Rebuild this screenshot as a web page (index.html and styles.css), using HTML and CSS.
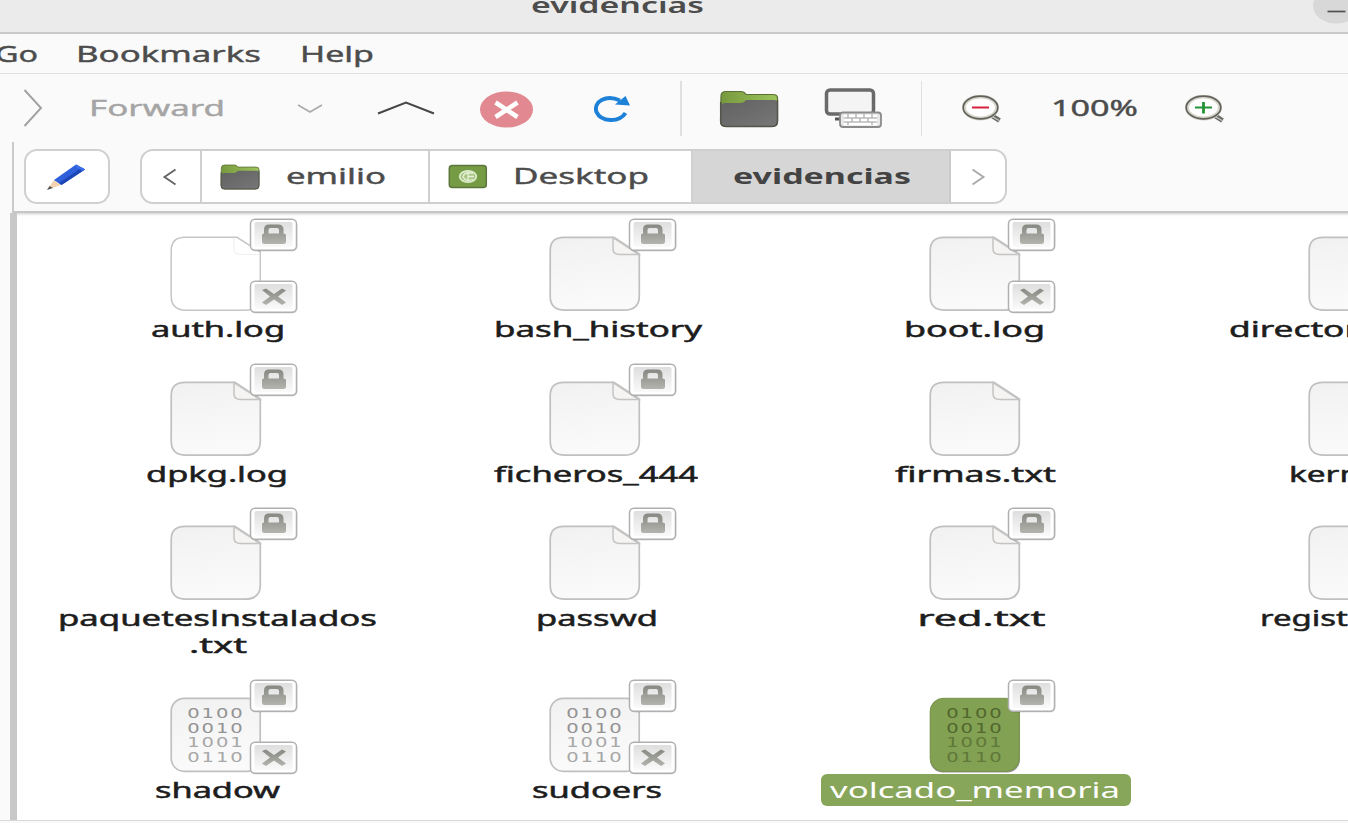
FILE: index.html
```html
<!DOCTYPE html>
<html lang="en">
<head>
<meta charset="utf-8">
<title>evidencias</title>
<link rel="stylesheet" href="styles.css">
</head>
<body>
<svg class="defs" width="0" height="0" aria-hidden="true">
  <defs>
    <linearGradient id="paper" x1="0" y1="0" x2=".15" y2="1"><stop offset="0" stop-color="#f1f1f1"/><stop offset=".5" stop-color="#f6f6f6"/><stop offset="1" stop-color="#fafafa"/></linearGradient>
    <linearGradient id="emb" x1="0" y1="0" x2="0" y2="1"><stop offset="0" stop-color="#dedede"/><stop offset="1" stop-color="#fafafa"/></linearGradient>
    <linearGradient id="glyph" x1="0" y1="0" x2="0" y2="1"><stop offset="0" stop-color="#868882"/><stop offset="1" stop-color="#b2b4ad"/></linearGradient>
    <linearGradient id="dark" x1="0" y1="0" x2="1" y2="1"><stop offset="0" stop-color="#616161"/><stop offset="1" stop-color="#777"/></linearGradient>
    <linearGradient id="green" x1="0" y1="0" x2="1" y2="0"><stop offset="0" stop-color="#77993e"/><stop offset="1" stop-color="#9dc45b"/></linearGradient>
    <symbol id="page" viewBox="0 0 92 77">
      <path d="M15 1.3H65L90.3 18V60Q90.3 74.2 75 74.2H16Q1.2 74.2 1.2 60V15Q1.2 1.3 15 1.3Z" fill="url(#paper)" stroke="#c0c0c0" stroke-width="1.7"/>
      <path d="M64 1.5V13Q64 18.5 71 18.5H90Z" fill="#f5f4f2" stroke="#c4c4c4" stroke-width="1.5"/>
    </symbol>
    <symbol id="blank" viewBox="0 0 92 77">
      <path d="M15 1.3H67L90.3 16V60Q90.3 74.2 75 74.2H16Q1.2 74.2 1.2 60V15Q1.2 1.3 15 1.3Z" fill="#fff" stroke="#c6c6c6" stroke-width="1.5"/>
      <path d="M64 2V13Q64 18.5 71 18.5H89" fill="none" stroke="#f0f0f0" stroke-width="1.2"/>
    </symbol>
    <symbol id="lock" viewBox="0 0 50 35">
      <rect x="1.5" y="2.5" width="47" height="31" rx="5" fill="#000" opacity=".13"/>
      <rect x="1.5" y="1.2" width="46" height="31" rx="4.5" fill="#fff" stroke="#b0b0b0" stroke-width="1.5"/>
      <rect x="5.5" y="4" width="38" height="25" rx="2" fill="url(#emb)"/>
      <path d="M13 17Q13 15.5 15 15.5V11.5Q15 6.5 20 6.5H29Q34.500 6.5 34.500 11.5V15.5Q37 15.5 37 17V24Q37 26 34.500 26H15.500Q13 26 13 24ZM19.500 15.500H30V12Q30 10 28 10H21.500Q19.500 10 19.500 12Z" fill="url(#glyph)"/>
    </symbol>
    <symbol id="deny" viewBox="0 0 50 35">
      <rect x="1.5" y="2.5" width="47" height="31" rx="5" fill="#000" opacity=".13"/>
      <rect x="1.5" y="1.2" width="46" height="31" rx="4.5" fill="#fff" stroke="#b0b0b0" stroke-width="1.5"/>
      <rect x="5.5" y="4" width="38" height="25" rx="2" fill="url(#emb)"/>
      <path d="M13 10 17 8.500 25 14 33 8.500 37 10.500 29 16.500 37 22.500 33 25 25 19.500 17 25 13 22.500 21 16.500Z" fill="url(#glyph)"/>
    </symbol>
    <symbol id="folder" viewBox="0 0 60 38">
      <path d="M2 6Q2 1.500 7 1.500H22Q25 1.500 27 4.500H54Q58.500 4.500 58.500 8V31Q58.500 36.500 53 36.500H7Q1.500 36.500 1.500 31Z" fill="url(#green)" stroke="#5c7036" stroke-width="1.2"/>
      <path d="M2 16Q2 13 7 13H21Q25 13 27 10H55Q58.500 10 58.500 13V31Q58.500 36.500 53 36.500H7Q1.500 36.500 1.500 31Z" fill="url(#dark)"/>
      <path d="M1.700 12V31Q1.700 36.500 7 36.500H53Q58.500 36.500 58.500 31V10" fill="none" stroke="#51554a" stroke-width="1.500"/>
    </symbol>
    <symbol id="lens" viewBox="0 0 40 28">
      <path d="M28 19.500 37.500 25.500" stroke="#6b6b66" stroke-width="5"/>
      <path d="M30 21.500 37 25.500" stroke="#c9c9c4" stroke-width="1.300"/>
      <ellipse cx="18.500" cy="12.500" rx="16.500" ry="11" fill="#fff" stroke="#d8d6cb" stroke-width="4"/>
      <ellipse cx="18.500" cy="12.500" rx="17.300" ry="11.400" fill="none" stroke="#62625d" stroke-width="1.700"/>
    </symbol>
  </defs>
</svg>

<div class="window">
  <header class="titlebar">
    <svg class="title" width="174" height="32"><text class="t semi" x="0" y="13" textLength="173" lengthAdjust="spacingAndGlyphs">evidencias</text></svg>
    <svg class="minimize" width="36" height="26"><ellipse cx="24" cy="6" rx="23" ry="17.500" fill="#d8d8d8"/><path d="M15.500 11.500H33.500" stroke="#505050" stroke-width="1.700"/></svg>
  </header>

  <nav class="menubar">
    <svg class="go" width="40" height="38"><text class="t" x="-5" y="28.200" textLength="43" lengthAdjust="spacingAndGlyphs">Go</text></svg>
    <svg class="bookmarks" width="186" height="38"><text class="t" x="0" y="28.200" textLength="185" lengthAdjust="spacingAndGlyphs">Bookmarks</text></svg>
    <svg width="76" height="38"><text class="t" x="0" y="28.200" textLength="74" lengthAdjust="spacingAndGlyphs">Help</text></svg>
  </nav>

  <div class="toolbar">
    <svg class="forward-arrow" width="24" height="42"><path d="M4.500 3 21 21 4.500 39" fill="none" stroke="#a0a0a0" stroke-width="1.900"/></svg>
    <svg class="forward" width="140" height="42"><text class="t muted" x="0" y="28.500" textLength="136" lengthAdjust="spacingAndGlyphs">Forward</text></svg>
    <svg class="drop" width="28" height="12"><path d="M2 3 14 10 26 3" fill="none" stroke="#aaa" stroke-width="1.700"/></svg>
    <svg class="up" width="60" height="16"><path d="M2 13.500 30 2.500 58 13.500" fill="none" stroke="#464646" stroke-width="1.900"/></svg>
    <svg class="stop" width="54" height="37"><ellipse cx="27.500" cy="18.500" rx="26.500" ry="18" fill="#e18890"/><path d="M16.500 11.500 38.500 26M38.500 11.500 16.500 26" stroke="#fff" stroke-width="4.500"/></svg>
    <svg class="reload" width="40" height="28"><path d="M33.500 18C27 28 9 27 4.500 17C1 7 14-1 28 5.500" fill="none" stroke="#1d82d7" stroke-width="4"/><path d="M33.500 1 38 10.500 23 9.500Z" fill="#1d82d7"/></svg>
    <i class="separator"></i>
    <svg class="home" width="60" height="38"><use href="#folder"/></svg>
    <svg class="computer" width="60" height="42">
      <rect x="3.500" y="3" width="47" height="24" rx="3.500" fill="#f4f4f4" stroke="#6a6a6a" stroke-width="3.500"/>
      <path d="M12 32H22" stroke="#555" stroke-width="3"/>
      <rect x="17" y="25.500" width="41" height="14.500" rx="3" fill="#e8e8e8" stroke="#8a8a8a" stroke-width="1.800"/>
      <path d="M21 29H54M21 33H54M21 37H54" stroke="#fff" stroke-width="2.500"/>
      <path d="M21 31H54M21 35H54M25 27V31M33 27V31M41 27V31M49 27V31M29 31V35M37 31V35M45 31V35M25 35V38M49 35V38" stroke="#aaa" stroke-width="1.200"/>
    </svg>
    <i class="separator"></i>
    <svg class="zoom-out" width="40" height="28"><use href="#lens"/><path d="M10 12.500H27" stroke="#d4213d" stroke-width="2"/></svg>
    <svg class="percent" width="90" height="42"><text class="t" x="0" y="28.500" textLength="87" lengthAdjust="spacingAndGlyphs">100%</text></svg>
    <svg class="zoom-in" width="40" height="28"><use href="#lens"/><path d="M10 12.500H27" stroke="#249334" stroke-width="2"/><path d="M18.500 7V18.500" stroke="#249334" stroke-width="2.800"/></svg>
  </div>

  <div class="locationbar">
    <div class="button edit">
      <svg width="42" height="28"><path d="M1.500 26.500 8 17 15 22Z" fill="#f3d3b0"/><path d="M1 27 3.500 23 7 25Z" fill="#555"/><path d="M8 17 30 1.500 39 6.500 15.500 22Z" fill="#2f60dc"/><path d="M13 20 36 4.500 39 6.500 15.500 22Z" fill="#1c46b5"/><path d="M28.500 3 30.500 1.500 39 6.500 36.500 8Z" fill="#3c6ee9"/></svg>
    </div>
    <div class="crumbs">
      <div class="crumb prev"><svg width="16" height="18"><path d="M14.500 1.500 3.500 9 14.500 16.500" fill="none" stroke="#666" stroke-width="1.900"/></svg></div>
      <div class="crumb emilio">
        <svg width="40" height="26" viewBox="0 0 60 38" preserveAspectRatio="none"><use href="#folder" width="60" height="38"/></svg>
        <svg width="102" height="51"><text class="t" x="0" y="33" textLength="100" lengthAdjust="spacingAndGlyphs">emilio</text></svg>
      </div>
      <div class="crumb desktop">
        <svg width="40" height="25"><rect x="1.300" y="1.500" width="37" height="22" rx="3" fill="#769b45" stroke="#5b753a" stroke-width="1.500"/><ellipse cx="20" cy="12.500" rx="8.300" ry="5.700" fill="#a8c584" stroke="#dcebca" stroke-width="1.700"/><path d="M25 9.500Q17 7 15 12.500Q17 18 25 15.500M20 9.500V15.500M20 12.500H26" fill="none" stroke="#e6f1d8" stroke-width="1.300"/></svg>
        <svg width="140" height="51"><text class="t" x="0" y="33" textLength="136" lengthAdjust="spacingAndGlyphs">Desktop</text></svg>
      </div>
      <div class="crumb current"><svg width="179" height="51"><text class="t bold" x="0" y="33" textLength="178" lengthAdjust="spacingAndGlyphs">evidencias</text></svg></div>
      <div class="crumb next"><svg width="16" height="18"><path d="M2.500 1.500 13.500 9 2.500 16.500" fill="none" stroke="#aaa" stroke-width="1.900"/></svg></div>
    </div>
  </div>

  <main class="files">
    <div class="file"><div class="icon"><svg width="92" height="77"><use href="#blank"/></svg><svg class="badge top" width="50" height="35"><use href="#lock"/></svg><svg class="badge low" width="50" height="35"><use href="#deny"/></svg></div>
      <svg class="label" width="134" height="34"><text class="t name" y="24.500" textLength="134" lengthAdjust="spacingAndGlyphs">auth.log</text></svg></div>
    <div class="file"><div class="icon"><svg width="92" height="77"><use href="#page"/></svg><svg class="badge top" width="50" height="35"><use href="#lock"/></svg></div>
      <svg class="label" width="208" height="34"><text class="t name" x="1" y="24.500" textLength="208" lengthAdjust="spacingAndGlyphs">bash_history</text></svg></div>
    <div class="file"><div class="icon"><svg width="92" height="77"><use href="#page"/></svg><svg class="badge top" width="50" height="35"><use href="#lock"/></svg><svg class="badge low" width="50" height="35"><use href="#deny"/></svg></div>
      <svg class="label" width="142" height="34"><text class="t name" x="-1" y="24.500" textLength="141" lengthAdjust="spacingAndGlyphs">boot.log</text></svg></div>
    <div class="file"><div class="icon"><svg width="92" height="77"><use href="#page"/></svg></div>
      <svg class="label" width="252" height="34"><text class="t name" x="-1" y="24.500" textLength="130" lengthAdjust="spacingAndGlyphs">director</text></svg></div>

    <div class="file"><div class="icon"><svg width="92" height="77"><use href="#page"/></svg><svg class="badge top" width="50" height="35"><use href="#lock"/></svg></div>
      <svg class="label" width="143" height="34"><text class="t name" y="24.500" textLength="142" lengthAdjust="spacingAndGlyphs">dpkg.log</text></svg></div>
    <div class="file"><div class="icon"><svg width="92" height="77"><use href="#page"/></svg><svg class="badge top" width="50" height="35"><use href="#lock"/></svg></div>
      <svg class="label" width="205" height="34"><text class="t name" y="24.500" textLength="204" lengthAdjust="spacingAndGlyphs">ficheros_444</text></svg></div>
    <div class="file"><div class="icon"><svg width="92" height="77"><use href="#page"/></svg></div>
      <svg class="label" width="162" height="34"><text class="t name" y="24.500" textLength="161" lengthAdjust="spacingAndGlyphs">firmas.txt</text></svg></div>
    <div class="file"><div class="icon"><svg width="92" height="77"><use href="#page"/></svg></div>
      <svg class="label" width="133" height="34"><text class="t name" y="24.500" textLength="71" lengthAdjust="spacingAndGlyphs">kern</text></svg></div>

    <div class="file"><div class="icon"><svg width="92" height="77"><use href="#page"/></svg><svg class="badge top" width="50" height="35"><use href="#lock"/></svg></div>
      <svg class="label" width="320" height="60"><text class="t name" y="24.500" textLength="319" lengthAdjust="spacingAndGlyphs">paquetes<tspan class="plain">I</tspan>nstalados</text><text class="t name" x="131" y="52" textLength="58" lengthAdjust="spacingAndGlyphs">.txt</text></svg></div>
    <div class="file"><div class="icon"><svg width="92" height="77"><use href="#page"/></svg><svg class="badge top" width="50" height="35"><use href="#lock"/></svg></div>
      <svg class="label" width="122" height="34"><text class="t name" y="24.500" textLength="122" lengthAdjust="spacingAndGlyphs">passwd</text></svg></div>
    <div class="file"><div class="icon"><svg width="92" height="77"><use href="#page"/></svg><svg class="badge top" width="50" height="35"><use href="#lock"/></svg></div>
      <svg class="label" width="128" height="34"><text class="t name" x="5.500" y="24.500" textLength="128" lengthAdjust="spacingAndGlyphs">red.txt</text></svg></div>
    <div class="file"><div class="icon"><svg width="92" height="77"><use href="#page"/></svg></div>
      <svg class="label" width="191" height="34"><text class="t name" y="24.500" textLength="88" lengthAdjust="spacingAndGlyphs">regist</text></svg></div>

    <div class="file"><div class="icon"><svg class="binary" width="92" height="77"><rect x="1.200" y="1.300" width="89" height="73" rx="13" fill="url(#paper)" stroke="#c0c0c0" stroke-width="1.700"/><g class="bits" transform="scale(1.35 1)"><text x="12.800" y="21.500">0100</text><text x="12.800" y="36">0010</text><text class="pale" x="12.800" y="50.500">1001</text><text class="pale" x="12.800" y="65">0110</text></g></svg><svg class="badge top" width="50" height="35"><use href="#lock"/></svg><svg class="badge low" width="50" height="35"><use href="#deny"/></svg></div>
      <svg class="label" width="125" height="34"><text class="t name" y="24.500" textLength="125" lengthAdjust="spacingAndGlyphs">shadow</text></svg></div>
    <div class="file"><div class="icon"><svg class="binary" width="92" height="77"><rect x="1.200" y="1.300" width="89" height="73" rx="13" fill="url(#paper)" stroke="#c0c0c0" stroke-width="1.700"/><g class="bits" transform="scale(1.35 1)"><text x="12.800" y="21.500">0100</text><text x="12.800" y="36">0010</text><text class="pale" x="12.800" y="50.500">1001</text><text class="pale" x="12.800" y="65">0110</text></g></svg><svg class="badge top" width="50" height="35"><use href="#lock"/></svg><svg class="badge low" width="50" height="35"><use href="#deny"/></svg></div>
      <svg class="label" width="130" height="34"><text class="t name" y="24.500" textLength="130" lengthAdjust="spacingAndGlyphs">sudoers</text></svg></div>
    <div class="file selected"><div class="icon"><svg class="binary" width="92" height="77"><rect x="1" y="2.500" width="90" height="73" rx="13" fill="#8c8f88"/><rect x="1.200" y="1.300" width="89" height="73" rx="13" fill="#83a152" stroke="#78944c" stroke-width="1"/><g class="bits green" transform="scale(1.35 1)"><text x="12.800" y="21.500">0100</text><text x="12.800" y="36">0010</text><text class="pale" x="12.800" y="50.500">1001</text><text class="pale" x="12.800" y="65">0110</text></g></svg><svg class="badge top" width="50" height="35"><use href="#lock"/></svg></div>
      <svg class="label" width="310" height="32"><text class="t name" x="9" y="23.500" textLength="290" lengthAdjust="spacingAndGlyphs">volcado_memoria</text></svg></div>
  </main>
  <footer class="statusbar"></footer>
</div>
</body>
</html>
```
FILE: styles.css
```css
* { box-sizing: border-box; }
body { margin: 0; overflow: hidden; font-family: "Noto Sans", "Open Sans", sans-serif; }
svg { display: block; flex: none; }
.defs { position: absolute; }
.window { width: 1348px; height: 823px; overflow: hidden; display: flex; flex-direction: column; background: #fafafa; }
.window > * { flex: none; }
.t { font: 22px "Noto Sans", "Open Sans", sans-serif; fill: #4c4c4c; stroke: #4c4c4c; stroke-width: .4px; }
.muted { fill: #a5a5a5; stroke: #a5a5a5; }
.bold { font-weight: 700; fill: #434343; stroke: none; }
.semi { font-weight: 600; stroke: none; }
.name { fill: #1d1d1d; stroke: #1d1d1d; stroke-width: .5px; }
.plain { font-family: "Open Sans", sans-serif; }

.titlebar { height: 34px; display: flex; justify-content: space-between; padding-left: 531px; background: #ebebeb; border-bottom: 2px solid #c9c9c9; }
.title, .go { overflow: visible; }
.menubar { height: 40px; display: flex; border-bottom: 1px solid #e0e0e0; }
.go { margin-right: 36px; }
.bookmarks { margin-right: 38px; }

.toolbar { height: 68px; display: flex; align-items: center; padding-left: 20px; }
.forward-arrow { margin-right: 45px; }
.forward { margin-right: 67px; }
.drop { margin-right: 52px; }
.up { margin-right: 43px; }
.stop { margin: 3px 59px 0 0; }
.reload { margin: 2px 48px 0 0; }
.separator { width: 1.5px; height: 55px; background: #e0e0e0; }
.home { margin: 2px 44px 0 37px; }
.computer { margin: 0 38px 0 0; }
.zoom-out { margin: 2px 49px 0 40px; }
.percent { margin-right: 44px; }
.zoom-in { margin-top: 2px; }

.locationbar { height: 71px; margin-left: 12px; display: flex; align-items: flex-start; gap: 30px; padding: 7px 0 0 10px; border-left: 2px solid #cbcbcb; border-bottom: 2px solid #c6c6c6; box-shadow: -14px 2px 0 -2px #fafafa; }
.button { width: 86px; height: 55px; display: flex; align-items: center; justify-content: center; background: #fff; border: 2px solid #d0d0d0; border-radius: 13px; }
.crumbs { height: 55px; display: flex; border: 2px solid #cfcfcf; border-radius: 13px; overflow: hidden; background: #fff; }
.crumb { display: flex; align-items: center; border-right: 2px solid #d0d0d0; }
.prev { width: 60px; padding-left: 19px; }
.emilio { width: 228px; padding-left: 18px; gap: 26px; }
.desktop { width: 263px; padding-left: 18px; gap: 25px; }
.current { width: 258px; padding-left: 40px; background: #d6d6d6; border-right-color: #cacaca; }
.next { width: 54px; border: 0; justify-content: center; }

.files { height: 607px; margin-left: 10px; padding-left: 9.5px; display: grid; grid-template-columns: repeat(4, 379.3px); grid-template-rows: 144.5px 144.5px 172px 146px; overflow: hidden; background: #fff; border-left: 7px solid #c8c8c8; box-shadow: inset 0 4px 3px -3px #ccc; }
.file { display: flex; flex-direction: column; align-items: center; padding-top: 23px; }
.icon { position: relative; height: 76px; width: 92px; }
.badge { position: absolute; left: 78.5px; }
.badge.top { top: -18px; }
.badge.low { top: 44px; }
.label { margin-left: 3px; overflow: visible; }
.bits text { font: 14.5px "DejaVu Sans", sans-serif; letter-spacing: 1.4px; fill: #939393; }
.bits .pale { fill: #a8a8a8; }
.bits.green text { fill: #51672f; }
.bits.green .pale { fill: #60783a; }
.selected .label { margin-top: 1px; margin-left: 2px; background: #88a659; border-radius: 6px; }
.selected .name { fill: #fff; stroke: none; }
.statusbar { height: 3px; border-top: 1px solid #d8d8d8; }
```
